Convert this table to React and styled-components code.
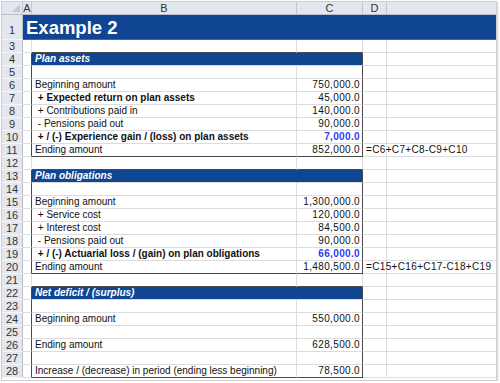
import React from "react";
import styled, { createGlobalStyle } from "styled-components";

const GRID = "#dcdcdc";
const BOX = "#4a4a4a";
const NAVY = "#0f4592";

const GlobalStyle = createGlobalStyle`
  html, body {
    margin: 0;
    padding: 0;
    background: #fff;
  }
  body {
    font-family: "Liberation Sans", Arial, sans-serif;
  }
`;

// one entry per visible sheet row (row 2 is hidden)
const rows = [
  { n: 1, type: "title", label: "Example 2" },
  { n: 3, boxBelow: true },
  { n: 4, type: "section", label: "Plan assets" },
  { n: 5, inBox: true },
  { n: 6, inBox: true, label: "Beginning amount", value: "750,000.0" },
  { n: 7, inBox: true, label: " + Expected return on plan assets", value: "45,000.0", bold: true },
  { n: 8, inBox: true, label: " + Contributions paid in", value: "140,000.0" },
  { n: 9, inBox: true, label: " - Pensions paid out", value: "90,000.0" },
  { n: 10, inBox: true, label: " + / (-) Experience gain / (loss) on plan assets", value: "7,000.0", bold: true, blue: true },
  { n: 11, inBox: true, last: true, label: "Ending amount", value: "852,000.0", formula: "=C6+C7+C8-C9+C10" },
  { n: 12, boxBelow: true },
  { n: 13, type: "section", label: "Plan obligations" },
  { n: 14, inBox: true },
  { n: 15, inBox: true, label: "Beginning amount", value: "1,300,000.0" },
  { n: 16, inBox: true, label: " + Service cost", value: "120,000.0" },
  { n: 17, inBox: true, label: " + Interest cost", value: "84,500.0" },
  { n: 18, inBox: true, label: " - Pensions paid out", value: "90,000.0" },
  { n: 19, inBox: true, label: " + / (-) Actuarial loss / (gain) on plan obligations", value: "66,000.0", bold: true, blue: true },
  { n: 20, inBox: true, last: true, label: "Ending amount", value: "1,480,500.0", formula: "=C15+C16+C17-C18+C19" },
  { n: 21, boxBelow: true },
  { n: 22, type: "section", label: "Net deficit / (surplus)" },
  { n: 23, inBox: true },
  { n: 24, inBox: true, label: "Beginning amount", value: "550,000.0" },
  { n: 25, inBox: true },
  { n: 26, inBox: true, label: "Ending amount", value: "628,500.0" },
  { n: 27, inBox: true },
  { n: 28, inBox: true, last: true, label: "Increase / (decrease) in period (ending less beginning)", value: "78,500.0" },
];

const App = () => {
  return (
    <>
      <GlobalStyle />
      <Frame>
        <Sheet>
          <Corner>
            <SelectAll />
          </Corner>
          <ColHead>A</ColHead>
          <ColHead>B</ColHead>
          <ColHead>C</ColHead>
          <ColHead>D</ColHead>
          <ColHead $last />

          {rows.map((r) => {
            if (r.type === "title") {
              return (
                <React.Fragment key={r.n}>
                  <RowHead $tall>{r.n}</RowHead>
                  <Title>{r.label}</Title>
                </React.Fragment>
              );
            }
            if (r.type === "section") {
              return (
                <React.Fragment key={r.n}>
                  <RowHead>{r.n}</RowHead>
                  <Cell $boxRight />
                  <Section>{r.label}</Section>
                  <Cell />
                  <Cell $last />
                </React.Fragment>
              );
            }
            const edge = r.boxBelow || r.last;
            return (
              <React.Fragment key={r.n}>
                <RowHead>{r.n}</RowHead>
                <Cell $boxRight={r.inBox} />
                <Cell $boxBottom={edge} $bold={r.bold}>
                  {r.label}
                </Cell>
                <Cell $boxBottom={edge} $boxRight={r.inBox} $num $bold={r.blue} $blue={r.blue}>
                  {r.value}
                </Cell>
                <Cell $formula>{r.formula}</Cell>
                <Cell $last />
              </React.Fragment>
            );
          })}
        </Sheet>
      </Frame>
    </>
  );
};

export default App;

const Frame = styled.div`
  margin: 1px 0 0 1px;
  width: 494px;
  height: 378px;
  border: 1px solid #cfcfcf;
  box-shadow: 1px 1px 2px rgba(0, 0, 0, 0.18);
  overflow: hidden;
  background: #fff;
`;

const Sheet = styled.div`
  display: grid;
  grid-template-columns: 21px 9px 265px 66px 24px 1fr;
  grid-auto-rows: 13px;
  grid-template-rows: 13px 25px;
  font-size: 10px;
  color: #111;
`;

const Corner = styled.div`
  position: relative;
  background: #e3e7ed;
  border-right: 1px solid #c3c9d2;
  border-bottom: 1px solid #b8bfca;
  box-sizing: border-box;
`;

const SelectAll = styled.span`
  position: absolute;
  right: 2px;
  bottom: 2px;
  width: 0;
  height: 0;
  border-left: 8px solid transparent;
  border-bottom: 8px solid #c4c9d0;
`;

const ColHead = styled.div`
  background: #e3e7ed;
  border-right: 1px solid ${(p) => (p.$last ? "transparent" : "#c3c9d2")};
  border-bottom: 1px solid #b8bfca;
  box-sizing: border-box;
  text-align: center;
  font-size: 11px;
  line-height: 12px;
  color: #333;
`;

const RowHead = styled.div`
  background: #e3e7ed;
  border-right: 1px solid #b8bfca;
  border-bottom: 1px solid #f4f6f9;
  box-sizing: border-box;
  text-align: center;
  font-size: 11px;
  line-height: ${(p) => (p.$tall ? "30px" : "13px")};
  color: #333;
`;

const Title = styled.div`
  grid-column: 2 / -1;
  background: ${NAVY};
  color: #fff;
  font-weight: bold;
  font-size: 18.5px;
  line-height: 25px;
  padding-left: 3px;
  box-sizing: border-box;
  border-bottom: 1px solid #3c6aa8;
`;

const Section = styled.div`
  grid-column: 3 / 5;
  background: ${NAVY};
  color: #fff;
  font-weight: bold;
  font-style: italic;
  line-height: 12px;
  padding-left: 3px;
  box-sizing: border-box;
  border-right: 1px solid ${BOX};
  border-bottom: 1px solid ${GRID};
`;

const Cell = styled.div`
  box-sizing: border-box;
  border-right: 1px solid
    ${(p) => (p.$boxRight ? BOX : p.$last ? "transparent" : GRID)};
  border-bottom: 1px solid ${(p) => (p.$boxBottom ? BOX : GRID)};
  line-height: 12px;
  white-space: pre;
  overflow: visible;
  padding: 0 ${(p) => (p.$num ? "2px" : "0")} 0 ${(p) => (p.$formula ? "3px" : p.$num ? "0" : "3px")};
  text-align: ${(p) => (p.$num ? "right" : "left")};
  letter-spacing: ${(p) => (p.$num || p.$formula ? "0.35px" : "normal")};
  font-weight: ${(p) => (p.$bold ? "bold" : "normal")};
  color: ${(p) => (p.$blue ? "#2f3cf0" : "#111")};
`;
